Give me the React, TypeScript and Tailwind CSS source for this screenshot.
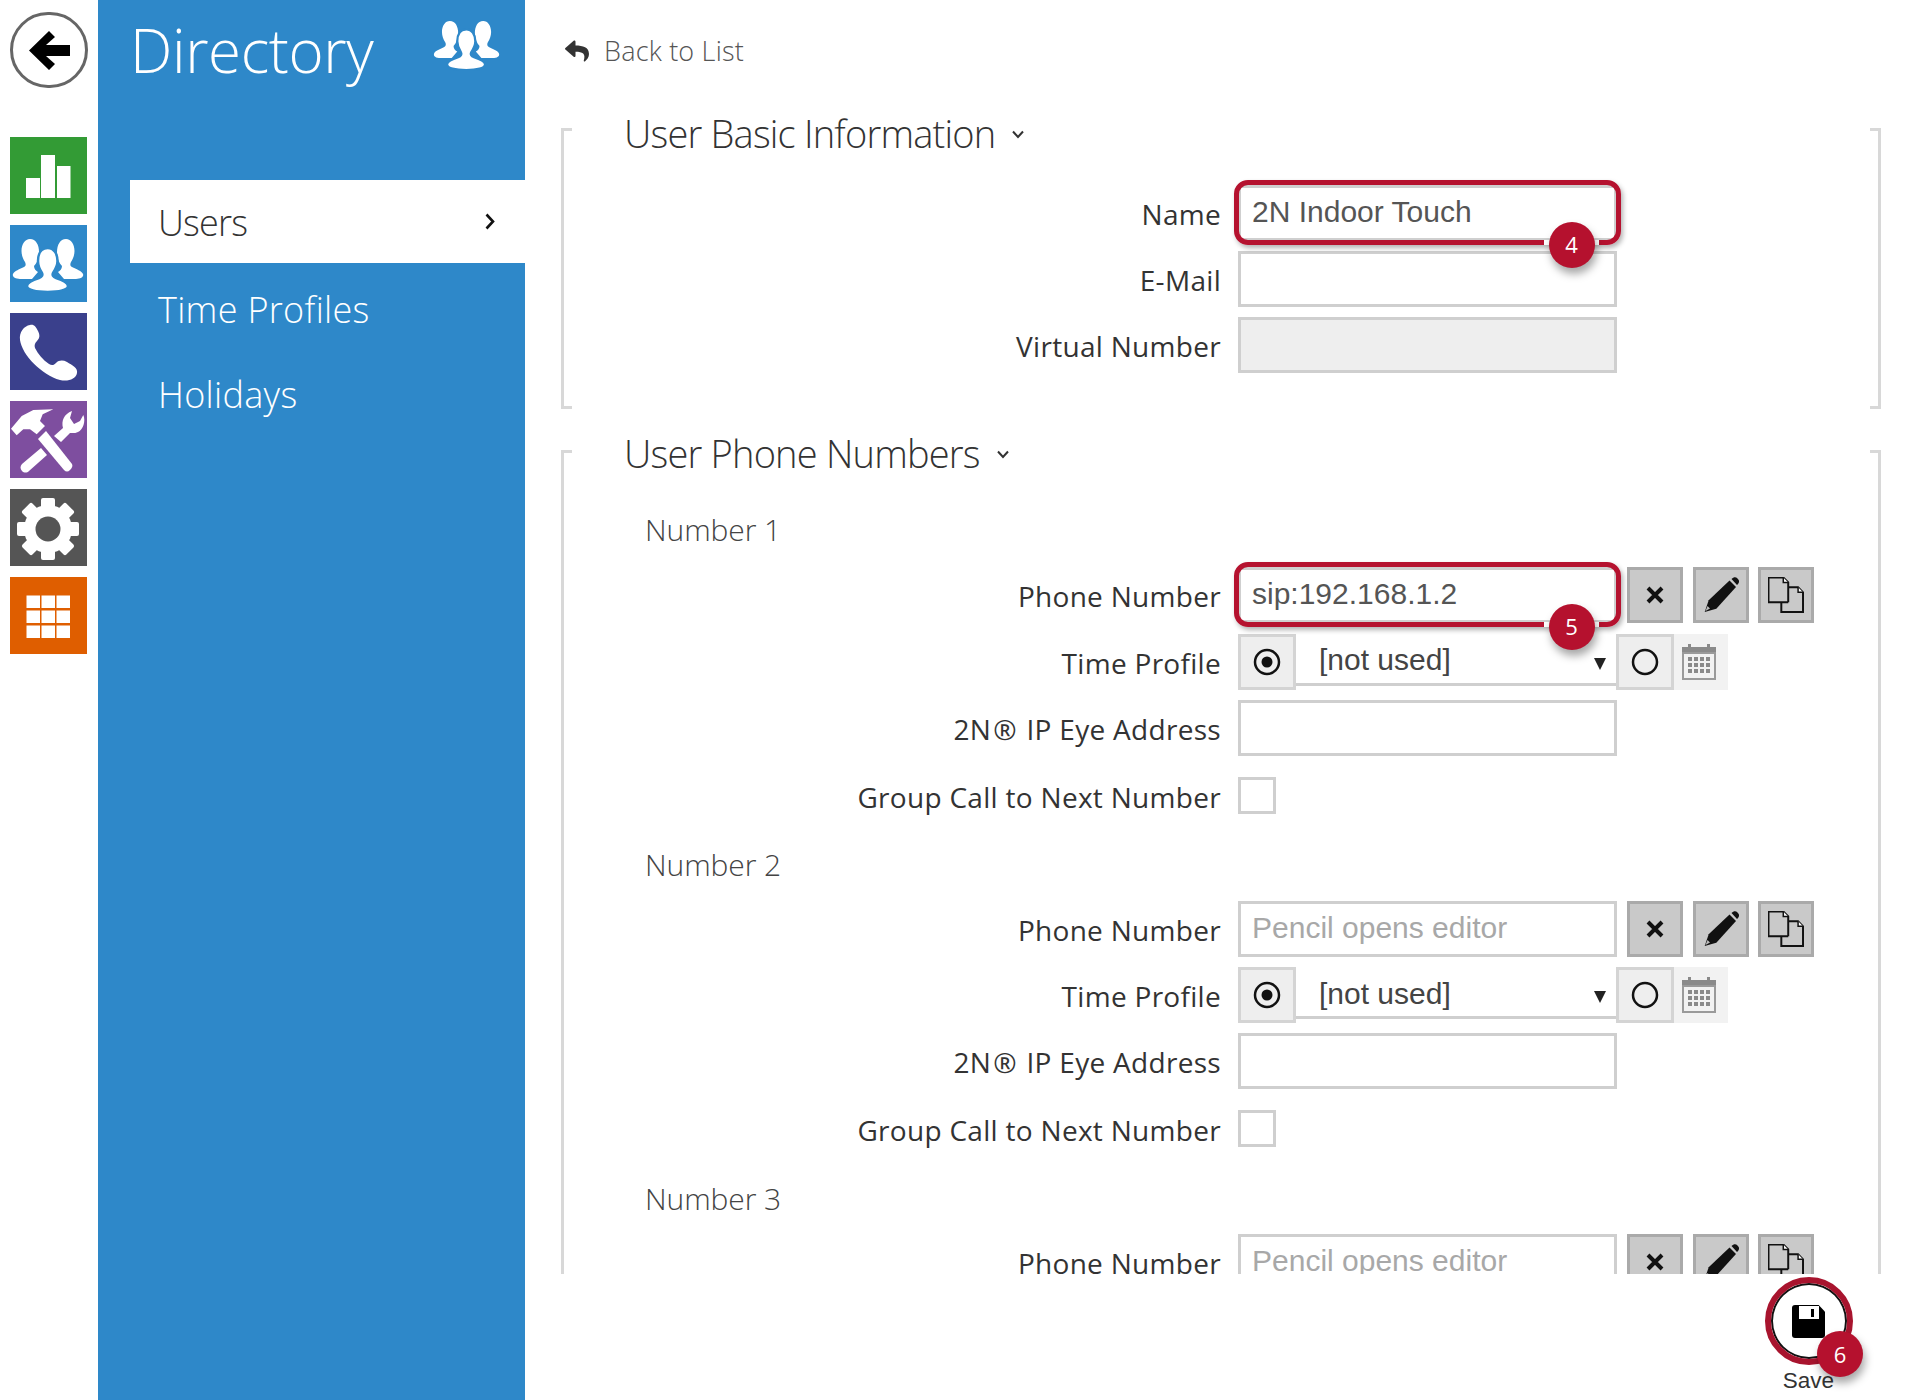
import React from "react";
import { FaReply } from "react-icons/fa";

const PERSON_SIDE =
  "M20 14C26 14 29 20 29 27C29 33 27 38 24 41C24 44 26 46 28 47L22 54H10C5 54 2 52 3 49C4 46 10 44 14 42C16 41 16 39 15 37C13 34 11.5 30 11.500 26C11.500 19 15 14 20 14Z";
const PERSON_MID =
  "M37.700 23C44 23 47.500 29 47.500 36C47.500 41 45 45 43 48C42 50 43 52 46 53C52 55 58 58 58 61C58 65 49 67 37.700 67C26 67 17 65 17 61C17 58 23 55 29 53C32 52 33 50 32 48C30 45 28 41 28 36C28 29 31 23 37.700 23Z";

const People = ({ bg, className }: { bg: string; className: string }) => (
  <svg viewBox="2 13 73 55" className={className}>
    <g fill="#fff">
      <path d={PERSON_SIDE} />
      <path d={PERSON_SIDE} transform="translate(76 0) scale(-1 1)" />
      <path d={PERSON_MID} stroke={bg} strokeWidth="2.500" />
    </g>
  </svg>
);

const Bars = () => (
  <svg viewBox="0 0 77 77" className="w-[77px] h-[77px]">
    <g fill="#fff">
      <rect x="16" y="41" width="14" height="20" />
      <rect x="31" y="18" width="14" height="43" />
      <rect x="47" y="29" width="13.500" height="32" />
    </g>
  </svg>
);

const Phone = () => (
  <svg viewBox="0 0 77 77" className="w-[77px] h-[77px]">
    <path
      fill="#fff"
      d="M20 12C14 13 9 19 10 27C12 42 32 62 50 67C58 69 66 66 67 60C68 55 62 52 57 49C53 47 49 47 46 50C44 52 42 53 39 51C33 47 28 41 25 35C24 32 25 30 27 28C30 25 30 22 28 18C26 14 24 11 20 12Z"
    />
  </svg>
);

const Tools = () => (
  <svg viewBox="0 0 77 77" className="w-[77px] h-[77px]">
    <g fill="#fff">
      <path d="M1 27.700L11.700 15L23.300 9L43.300 8.300L32.700 13.300L30 20L35 25L26.700 33.300L20 28.300L13.300 28.300L6.700 34.300Z" />
      <path d="M28 38L36 30L62 63C63 65 62 67 60 69C58 71 56 71 54 69Z" />
      <path d="M31 47L37 54L19 70C17 72 14 72 12 70C10 68 10 65 12 63Z" />
      <path d="M44 35L53 27C51 20 54 13 62 10L60 17L64 23L70 20L73.300 14C76 20 73 29 68 31C65 32.500 62 32 60 32L51 41Z" />
    </g>
  </svg>
);

const Gear = () => (
  <svg viewBox="0 0 77 77" className="w-[77px] h-[77px]">
    <g fill="#fff">
      <circle cx="38" cy="40" r="24" />
      {[0, 45, 90, 135, 180, 225, 270, 315].map((a) => (
        <rect key={a} x="31" y="9" width="14" height="14" rx="2" transform={`rotate(${a} 38 40)`} />
      ))}
    </g>
    <circle cx="38" cy="40" r="12.500" fill="#555" />
  </svg>
);

const Grid3 = () => (
  <svg viewBox="0 0 77 77" className="w-[77px] h-[77px]">
    <g fill="#fff">
      {[18.5, 33.5, 48.5].flatMap((y) =>
        [16.5, 31.5, 46.5].map((x) => <rect key={`${x}-${y}`} x={x} y={y} width="13.500" height="12.500" />)
      )}
    </g>
  </svg>
);

const tiles = [
  { bg: "bg-[#339b35]", icon: <Bars /> },
  { bg: "bg-[#2e88c9]", icon: <People bg="#2e88c9" className="w-[73px] h-[55px] mt-[5px]" /> },
  { bg: "bg-[#3a408c]", icon: <Phone /> },
  { bg: "bg-[#7e4e9f]", icon: <Tools /> },
  { bg: "bg-[#555555]", icon: <Gear /> },
  { bg: "bg-[#df5e00]", icon: <Grid3 /> },
];

const Badge = ({ n, className }: { n: number; className: string }) => (
  <div
    className={`absolute z-20 w-[46px] h-[46px] rounded-full bg-[#b5112e] text-white flex items-center justify-center text-[22px] font-['Open_Sans'] shadow-[2px_6px_8px_rgba(0,0,0,0.35)] ${className}`}
  >
    {n}
  </div>
);

const Highlight = ({ n }: { n: number }) => (
  <div className="absolute z-10 -left-[4px] -right-[4px] -top-[5px] -bottom-[4px] rounded-[14px] border-[5px] border-[#b5122f] shadow-[2px_3px_5px_rgba(0,0,0,0.3)] pointer-events-none">
    <div className="absolute right-[17px] -bottom-[5px] w-[55px] h-[5px] bg-white" />
    <Badge n={n} className="right-[21.500px] -bottom-[27.500px]" />
  </div>
);

const Label = ({ children }: { children: React.ReactNode }) => (
  <div className="w-[657px] mr-[17px] text-right text-[28px] leading-[36px] tracking-[0.3px] text-[#333] font-['Open_Sans'] pt-[11px] shrink-0">
    {children}
  </div>
);

const inputBase =
  "block w-[379px] h-[56px] border-[3px] border-[#cfcfcf] px-[11px] pb-[2px] text-[30px] font-['Liberation_Sans'] text-[#555] placeholder:text-[#a8a8a8] outline-none";
const inputCls = `${inputBase} bg-white`;

const IconBtn = ({ children }: { children: React.ReactNode }) => (
  <div className="w-[56px] h-[56px] bg-[#c9c9c9] border-[3px] border-[#aaaaaa] flex items-center justify-center shrink-0">
    {children}
  </div>
);

const XIcon = () => (
  <svg viewBox="0 0 18 18" className="w-[18px] h-[18px]">
    <path d="M2 2L16 16M16 2L2 16" stroke="#111" strokeWidth="4" fill="none" />
  </svg>
);

const PencilIcon = () => (
  <svg viewBox="0 0 36 36" className="w-[36px] h-[36px]">
    <path d="M1.700 35L5.700 23.300L26.500 3.500L33 10L13.300 31.700Z" fill="#111" />
    <path d="M28.500 2C31 -0.500 33 0 34.500 1.500C36.500 3.500 36.500 5 35 7L34 8Z" fill="#111" />
    <path d="M2.500 34L4.500 29L7 31.500Z" fill="#bbb" />
  </svg>
);

const CopyIcon = () => (
  <svg viewBox="-0.500 -0.500 36.500 36.500" className="w-[36px] h-[36px]">
    <g fill="none" stroke="#111" strokeWidth="2">
      <path d="M20 25V5L15 0H0V25H20" />
      <path d="M15 0V5H20" fill="#fff" strokeWidth="1.500" />
      <path d="M20 10H30L35 15V35H13V25" />
      <path d="M30 10V15H35" fill="#fff" strokeWidth="1.500" />
    </g>
  </svg>
);

const Buttons = () => (
  <div className="flex gap-[9.500px] ml-[10px]">
    <IconBtn>
      <XIcon />
    </IconBtn>
    <IconBtn>
      <PencilIcon />
    </IconBtn>
    <IconBtn>
      <CopyIcon />
    </IconBtn>
  </div>
);

const Radio = ({ on }: { on?: boolean }) => (
  <svg viewBox="0 0 28 28" className="w-[28px] h-[28px]">
    <circle cx="14" cy="14" r="12" fill="none" stroke="#111" strokeWidth="2.500" />
    {on && <circle cx="14" cy="14" r="5.500" fill="#111" />}
  </svg>
);

const Calendar = () => (
  <svg viewBox="0 0 34 36" className="w-[34px] h-[36px]">
    <path d="M0 3H6V0H9V3H25V0H28V3H34V9H0Z" fill="#8a8a8a" />
    <rect x="1" y="9" width="32" height="26" fill="none" stroke="#9a9a9a" strokeWidth="2" />
    <g fill="#8a8a8a">
      {[13, 19, 25].flatMap((y) =>
        [6, 12, 18, 24].map((x) => <rect key={`${x}-${y}`} x={x} y={y} width="4" height="4" />)
      )}
    </g>
  </svg>
);

const TimeProfile = () => (
  <div className="flex h-[56px]">
    <div className="w-[58px] h-full bg-[#eeeeee] border-[3px] border-[#d4d4d4] flex items-center justify-center shrink-0">
      <Radio on />
    </div>
    <div className="relative w-[320px] h-[52px] border-b-[3px] border-[#cfcfcf] bg-white pl-[23px] pt-[3px] flex items-center text-[30px] font-['Liberation_Sans'] text-[#444] shrink-0">
      [not used]
      <span className="absolute right-[10px] top-[24px] w-0 h-0 border-x-[6px] border-t-[12px] border-x-transparent border-t-[#222]" />
    </div>
    <div className="w-[58px] h-full bg-[#eeeeee] border-[3px] border-[#d4d4d4] flex items-center justify-center shrink-0">
      <Radio />
    </div>
    <div className="w-[54px] h-full bg-[#f2f2f2] flex items-center justify-center pr-[4px] shrink-0">
      <Calendar />
    </div>
  </div>
);

const SectionTitle = ({ children, offset }: { children: React.ReactNode; offset: string }) => (
  <div
    className={`${offset} h-[52px] pl-[60px] flex items-center text-[38px] font-light text-[#333] font-['Open_Sans'] tracking-[-0.8px]`}
  >
    {children}
    <svg viewBox="0 0 12 9" className="w-[12px] h-[9px] ml-[17px] mt-[2px]">
      <path d="M1 1.500L6 7L11 1.500" fill="none" stroke="#333" strokeWidth="2" />
    </svg>
  </div>
);

const Ticks = ({ bottom }: { bottom?: boolean }) => (
  <>
    <span className="absolute -left-[3px] -top-[3px] w-[11px] h-[3px] bg-[#d8d8d8]" />
    <span className="absolute -right-[3px] -top-[3px] w-[11px] h-[3px] bg-[#d8d8d8]" />
    {bottom && <span className="absolute -left-[3px] -bottom-[3px] w-[11px] h-[3px] bg-[#d8d8d8]" />}
    {bottom && <span className="absolute -right-[3px] -bottom-[3px] w-[11px] h-[3px] bg-[#d8d8d8]" />}
  </>
);

const NumberBlock = ({
  n,
  value,
  highlight,
  last,
}: {
  n: number;
  value?: string;
  highlight?: boolean;
  last?: boolean;
}) => (
  <div className="mb-[21px]">
    <div
      className={`h-[40px] ${n === 1 ? "mb-[18px]" : "mb-[16px]"} pl-[81px] flex items-center text-[30px] font-light text-[#444] font-['Open_Sans'] tracking-[-0.1px]`}
    >
      Number {n}
    </div>
    <div className="flex h-[56px] mb-[10.500px]">
      <Label>Phone Number</Label>
      <div className="relative">
        <input className={inputCls} readOnly value={value ?? ""} placeholder="Pencil opens editor" />
        {highlight && <Highlight n={5} />}
      </div>
      <Buttons />
    </div>
    {!last && (
      <>
        <div className="flex h-[56px] mb-[10px]">
          <Label>Time Profile</Label>
          <TimeProfile />
        </div>
        <div className="flex h-[56px] mb-[12px]">
          <Label>
            2N<span className="mx-[2px]">®</span> IP Eye Address
          </Label>
          <input className={inputCls} readOnly />
        </div>
        <div className="flex h-[56px]">
          <Label>Group Call to Next Number</Label>
          <div className="w-[38px] h-[37px] mt-[9px] border-[3px] border-[#cfcfcf] bg-white" />
        </div>
      </>
    )}
  </div>
);

export default function App() {
  return (
    <div className="flex w-[1920px] h-[1400px] bg-white overflow-hidden font-['Open_Sans']">
      <aside className="w-[98px] shrink-0 pl-[10px] pt-[12px]">
        <div className="w-[78px] h-[76px] rounded-full border-[3px] border-[#666] flex items-center justify-center">
          <svg viewBox="0 0 41 39" className="w-[41px] h-[39px]">
            <path d="M0 19.500L20 0L26 6L17 14H41V25H17L26 33L20 39Z" fill="#000" />
          </svg>
        </div>
        <div className="mt-[48.500px] flex flex-col gap-[10.500px]">
          {tiles.map((t, i) => (
            <div key={i} className={`w-[77px] h-[77.500px] flex items-center justify-center ${t.bg}`}>
              {t.icon}
            </div>
          ))}
        </div>
      </aside>

      <nav className="w-[427px] shrink-0 bg-[#2e88c9] pl-[32px]">
        <div className="flex h-[180px]">
          <div className="text-[60px] leading-[80px] mt-[10px] font-light text-white font-['Open_Sans'] tracking-[-0.4px] flex-1">
            Directory
          </div>
          <People bg="#2e88c9" className="w-[68px] h-[51px] mt-[20px] mr-[24px]" />
        </div>
        <div className="h-[82.500px] bg-white flex items-center pl-[28px] pr-[30px] justify-between text-[36px] font-light text-[#333]">
          <span className="tracking-[-0.8px] pt-[4px]">Users</span>
          <svg viewBox="0 0 10 17" className="w-[10px] h-[17px]">
            <path d="M1.500 1.500L8 8.500L1.500 15.500" fill="none" stroke="#111" strokeWidth="2.600" />
          </svg>
        </div>
        <div className="pl-[28px] text-[36px] font-light text-white tracking-[0.3px] mt-[22px] leading-[50px]">
          Time Profiles
        </div>
        <div className="pl-[28px] text-[36px] font-light text-white tracking-[0.3px] mt-[35px] leading-[50px]">
          Holidays
        </div>
      </nav>

      <main className="flex-1 min-w-0 flex flex-col">
        <div className="h-[1274px] overflow-hidden pl-[36px]">
          <div className="h-[102px] flex items-center pl-[2px]">
            <FaReply className="w-[28px] h-[24px] text-[#333]" />
            <span className="ml-[13px] text-[27px] font-light text-[#555] tracking-[0.2px]">Back to List</span>
          </div>

          <section className="relative flow-root mt-[29px] w-[1320px] border-x-[3px] border-[#d8d8d8] pb-[33px]">
            <Ticks bottom />
            <SectionTitle offset="-mt-[24px]">User Basic Information</SectionTitle>
            <div className="mt-[26px] flex h-[56px] mb-[10px]">
              <Label>Name</Label>
              <div className="relative">
                <input className={inputCls} readOnly value="2N Indoor Touch" />
                <Highlight n={4} />
              </div>
            </div>
            <div className="flex h-[56px] mb-[10px]">
              <Label>E-Mail</Label>
              <input className={inputCls} readOnly />
            </div>
            <div className="flex h-[56px]">
              <Label>Virtual Number</Label>
              <input className={`${inputBase} bg-[#eeeeee]`} readOnly />
            </div>
          </section>

          <section className="relative flow-root mt-[47px] w-[1320px] border-x-[3px] border-[#d8d8d8] pb-[40px]">
            <Ticks />
            <SectionTitle offset="-mt-[26px]">User Phone Numbers</SectionTitle>
            <div className="mt-[30px]">
              <NumberBlock n={1} value="sip:192.168.1.2" highlight />
              <NumberBlock n={2} />
              <NumberBlock n={3} last />
            </div>
          </section>
        </div>

        <div className="flex justify-end pr-[67.500px] pt-[3px]">
          <div className="relative w-[88px] flex flex-col items-center">
            <div className="w-[88px] h-[88px] rounded-full border-[6px] border-[#a8142e] bg-white flex items-center justify-center shadow-[inset_0_0_0_2px_#111]">
              <svg viewBox="0 0 33 33" className="w-[33px] h-[33px]">
                <path d="M3 0H26.700L33 6.700V30C33 32 32 33 30 33H3C1 33 0 32 0 30V3C0 1 1 0 3 0Z" fill="#000" />
                <rect x="7" y="1" width="20" height="13" fill="#fff" />
                <rect x="19" y="4" width="3" height="8" fill="#000" />
              </svg>
            </div>
            <Badge n={6} className="-right-[10.500px] top-[54px]" />
            <div className="mt-[3px] text-[22.500px] leading-[26px] font-['Liberation_Sans'] text-[#333]">Save</div>
          </div>
        </div>
      </main>
    </div>
  );
}
